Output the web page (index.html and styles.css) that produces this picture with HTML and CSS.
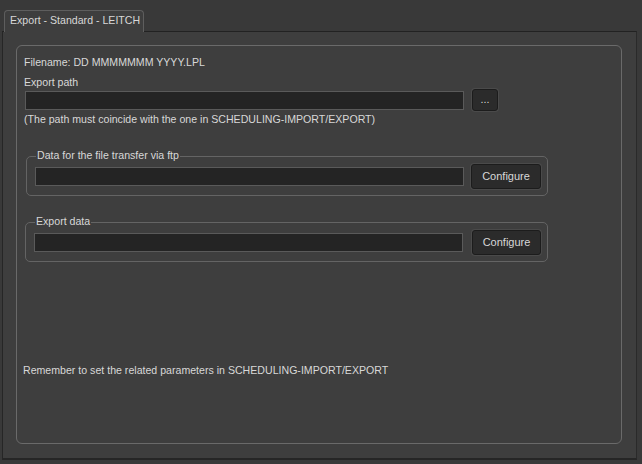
FILE: index.html
```html
<!DOCTYPE html>
<html>
<head>
<meta charset="utf-8">
<link rel="stylesheet" href="styles.css">
</head>
<body>
<div class="window">
  <div class="tabs">
    <div class="tab">Export - Standard - LEITCH</div>
  </div>
  <div class="panel">
    <div class="group">
      <div class="line first">Filename: DD MMMMMMM YYYY.LPL</div>
      <div class="line label">Export path</div>
      <div class="row path-row">
        <div class="input path-input"></div>
        <div class="btn dots">...</div>
      </div>
      <div class="line note">(The path must coincide with the one in SCHEDULING-IMPORT/EXPORT)</div>

      <div class="box box-ftp">
        <span class="legend">Data for the file transfer via ftp</span>
        <div class="row">
          <div class="input box-input"></div>
          <div class="btn cfg cfg1">Configure</div>
        </div>
      </div>

      <div class="box box-export">
        <span class="legend">Export data</span>
        <div class="row">
          <div class="input box-input"></div>
          <div class="btn cfg cfg2">Configure</div>
        </div>
      </div>

      <div class="line remember">Remember to set the related parameters in SCHEDULING-IMPORT/EXPORT</div>
    </div>
  </div>
</div>
</body>
</html>
```

FILE: styles.css
```css
* { box-sizing: border-box; }
html, body { margin: 0; padding: 0; }
body {
  width: 642px;
  height: 464px;
  background: #393939;
  font-family: "Liberation Sans", Arial, sans-serif;
  font-size: 10.6px;
  color: #d8d8d8;
  overflow: hidden;
}
.window {
  width: 642px;
  height: 464px;
  padding: 10px 0 0 2px;
}
.tabs {
  display: flex;
  height: 21px;
  padding-left: 2px;
}
.tab {
  width: 140px;
  height: 22px;
  background: #3e3e3e;
  border: 1px solid #5e5e5e;
  border-bottom: 0;
  border-radius: 4px 4px 0 0;
  padding: 3px 0 0 5px;
  line-height: 13px;
  white-space: nowrap;
  position: relative;
  z-index: 1;
}
.panel {
  width: 635px;
  height: 429px;
  background: #3e3e3e;
  border-left: 1px solid #262626;
  border-top: 1px solid #222222;
  border-right: 1px solid #2a2a2a;
  border-bottom: 2px solid #262626;
  padding: 13px 0 0 13px;
}
.group {
  width: 606px;
  height: 399px;
  border: 1px solid #6a6a6a;
  border-radius: 6px;
  padding: 10px 0 0 7px;
}
.line {
  line-height: 13px;
  height: 13px;
  white-space: nowrap;
}
.label { margin-top: 7px; }
.row {
  display: flex;
  align-items: center;
}
.path-row { height: 22px; }
.input {
  height: 19px;
  background: #242424;
  border: 1px solid #5a5a5a;
}
.path-input {
  width: 439px;
  margin-left: 1px;
}
.btn {
  background: #2b2b2b;
  border: 1px solid #1c1c1c;
  border-radius: 3px;
  box-shadow: 0 0 0 1px #4a4a4a;
  color: #d8d8d8;
  display: flex;
  align-items: center;
  justify-content: center;
}
.dots {
  width: 26px;
  height: 22px;
  margin-left: 8px;
  padding-bottom: 2px;
}
.note { margin-top: 2px; }
.box {
  position: relative;
  width: 522px;
  height: 40px;
  border: 1px solid #646464;
  border-radius: 5px;
  padding-left: 8px;
  display: flex;
  align-items: center;
}
.box-ftp { margin-top: 30px; margin-left: 2px; }
.box-export { margin-top: 26px; margin-left: 1px; width: 523px; }
.legend {
  position: absolute;
  left: 9px;
  top: -8px;
  line-height: 13px;
  padding: 0 1px;
  background: #3e3e3e;
  white-space: nowrap;
}
.box-input { width: 429px; }
.cfg {
  height: 25px;
  width: 70px;
  font-size: 11px;
}
.cfg1 { margin-left: 7px; }
.cfg2 { margin-left: 9px; width: 69px; }
.remember { margin-top: 102px; margin-left: -1px; }
```
